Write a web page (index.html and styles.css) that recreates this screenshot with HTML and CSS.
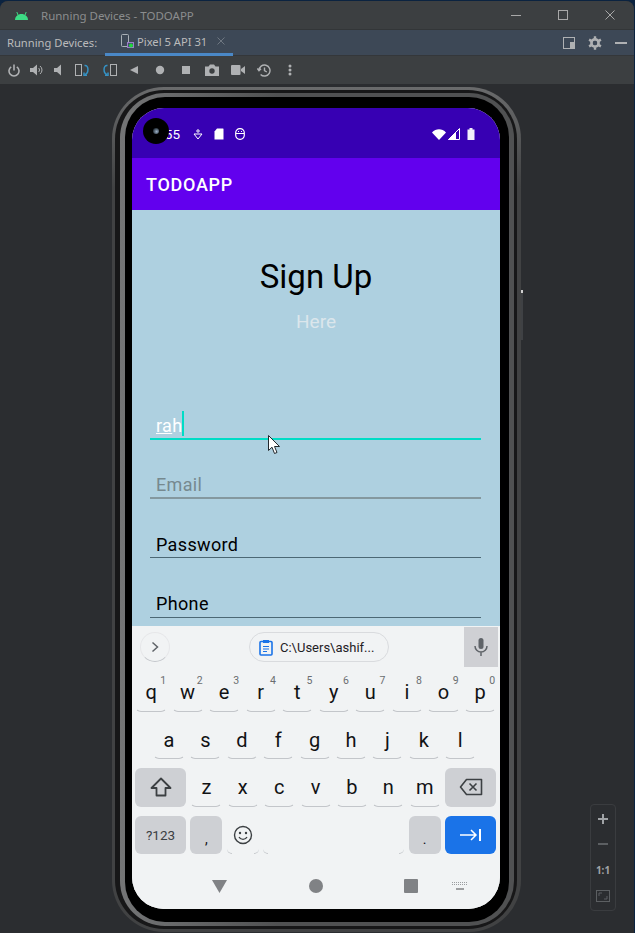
FILE: index.html
```html
<!DOCTYPE html>
<html lang="en">
<head>
  <meta charset="UTF-8">
  <meta name="viewport" content="width=device-width, initial-scale=1.0">
  <title>Running Devices - TODOAPP</title>
  <link rel="stylesheet" href="styles.css">
</head>
<body>
  <div class="window">
    <div class="titlebar">
      <svg class="android-logo" width="13" height="9" viewBox="0 0 13 9"><path d="M0 9C0 5.5 3 3 6.500 3S13 5.500 13 9Z" fill="#3ddc84"/><path d="M3 4 1.800 1M10 4l1.200-3" stroke="#3ddc84" stroke-width="1"/></svg>
      <span class="window-title">Running Devices - TODOAPP</span>
      <div class="window-controls">
        <svg width="10" height="10" viewBox="0 0 10 10"><path d="M0 5.500h10" stroke="#a8a8a8"/></svg>
        <svg width="10" height="10" viewBox="0 0 10 10"><rect x=".5" y=".5" width="9" height="9" fill="none" stroke="#a8a8a8"/></svg>
        <svg width="10" height="10" viewBox="0 0 10 10"><path d="M.5.500l9 9M9.500.500l-9 9" stroke="#a8a8a8"/></svg>
      </div>
    </div>

    <div class="tabbar">
      <span class="tabbar-label">Running Devices:</span>
      <div class="tab">
        <svg width="13" height="15" viewBox="0 0 13 15"><rect x=".5" y=".5" width="7" height="12" rx="1" fill="none" stroke="#a9b0b6"/><rect x="6.500" y="8.500" width="6" height="5" fill="#4b4a6e" stroke="#9a80c8"/><circle cx="10" cy="11.500" r="2" fill="#1fd63c"/></svg>
        <span>Pixel 5 API 31</span>
        <svg class="tab-close" width="8" height="8" viewBox="0 0 8 8"><path d="M.5.500l7 7M7.500.500l-7 7" stroke="#6e7781"/></svg>
      </div>
      <div class="tabbar-actions">
        <svg width="12" height="12" viewBox="0 0 12 12"><rect x=".5" y=".5" width="11" height="11" fill="none" stroke="#afb1b3"/><rect x="7" y="5" width="4" height="6" fill="#afb1b3"/></svg>
        <svg width="14" height="14" viewBox="0 0 14 14"><circle cx="7" cy="7" r="3.600" fill="none" stroke="#afb1b3" stroke-width="2.600"/><path d="M7 .2v2.300M7 11.500v2.300M1.100 3.600l3.900 2.250M12.900 10.400 9 8.150M1.100 10.400 5 8.150M12.900 3.600 9 5.850" stroke="#afb1b3" stroke-width="2.400"/><circle cx="7" cy="7" r="2.200" fill="#3d4856"/></svg>
        <svg width="12" height="12" viewBox="0 0 12 12"><path d="M0 6h12" stroke="#afb1b3" stroke-width="2"/></svg>
      </div>
    </div>

    <div class="toolbar">
      <svg width="12" height="13" viewBox="0 0 12 13"><path d="M3.200 2.800a5 5 0 1 0 5.600 0M6 .5v6" fill="none" stroke="#afb1b3" stroke-width="1.600"/></svg>
      <svg width="13" height="12" viewBox="0 0 13 12"><path d="M0 4h3l4-3.500v11L3 8H0Z" fill="#afb1b3"/><path d="M8.500 4a2.500 2.500 0 0 1 0 4M10 2a5 5 0 0 1 0 8" fill="none" stroke="#afb1b3"/></svg>
      <svg width="11" height="12" viewBox="0 0 11 12"><path d="M1 4h3l4-3.500v11L4 8H1Z" fill="#afb1b3"/></svg>
      <svg width="15" height="12" viewBox="0 0 15 12"><rect x=".5" y=".5" width="6" height="11" fill="none" stroke="#afb1b3"/><path d="M9.500 1.500c4.500-1 4.500 8 .5 9M9 8.500v3h3" fill="none" stroke="#3592c4" stroke-width="1.500"/></svg>
      <svg width="15" height="12" viewBox="0 0 15 12"><rect x="8.500" y=".5" width="6" height="11" fill="none" stroke="#afb1b3"/><path d="M5.500 1.500c-4.500-1-4.500 8-.5 9M6 8.500v3H3" fill="none" stroke="#3592c4" stroke-width="1.500"/></svg>
      <svg width="10" height="10" viewBox="0 0 10 10"><path d="M9 1v8L1 5Z" fill="#afb1b3"/></svg>
      <svg width="10" height="10" viewBox="0 0 10 10"><circle cx="5" cy="5" r="4.200" fill="#afb1b3"/></svg>
      <svg width="10" height="10" viewBox="0 0 10 10"><rect x="1" y="1" width="8" height="8" fill="#afb1b3"/></svg>
      <svg width="14" height="12" viewBox="0 0 14 12"><path d="M0 2.500h3.500L5 .5h4l1.500 2H14V12H0Z" fill="#afb1b3"/><circle cx="7" cy="7" r="2.700" fill="#3c3f41"/></svg>
      <svg width="14" height="10" viewBox="0 0 14 10"><rect y="0" width="9.500" height="10" rx="1" fill="#afb1b3"/><path d="M10 4l4-3v8l-4-3Z" fill="#afb1b3"/></svg>
      <svg width="14" height="13" viewBox="0 0 14 13"><path d="M2 6.500a5.500 5.500 0 1 1 1.600 3.900M.3 4.500 2 6.800 4 4.800M7.500 3.500v3.200l2.300 1.300" fill="none" stroke="#afb1b3" stroke-width="1.400"/></svg>
      <svg width="4" height="12" viewBox="0 0 4 12"><circle cx="2" cy="2" r="1.500" fill="#afb1b3"/><circle cx="2" cy="6" r="1.500" fill="#afb1b3"/><circle cx="2" cy="10" r="1.500" fill="#afb1b3"/></svg>
    </div>

    <div class="stage">
      <div class="phone">
        <div class="phone-band">
          <div class="phone-rim">
            <div class="phone-bezel">
              <div class="screen">
                <div class="statusbar">
                  <span class="clock">9:55</span>
                  <svg width="10" height="11" viewBox="0 0 10 11"><circle cx="5" cy="2" r="1.200" fill="none" stroke="#fff"/><path d="M1 5h8L5 10Z" fill="none" stroke="#fff"/></svg>
                  <svg width="10" height="12" viewBox="0 0 10 12"><path d="M3 .5h6a.5.500 0 0 1 .5.500v10.500H.5V3.500Z" fill="#fff"/></svg>
                  <svg width="10" height="12" viewBox="0 0 10 12"><rect x=".7" y=".7" width="8.600" height="10.600" rx="4" fill="none" stroke="#fff" stroke-width="1.200"/><path d="M1 5.500h8" stroke="#fff"/><path d="M3 3.500h1M6 3.500h1" stroke="#fff"/></svg>
                  <div class="status-right">
                    <svg width="14" height="11" viewBox="0 0 14 11"><path d="M0 3.500C4-.7 10-.7 14 3.500L7 11Z" fill="#fff"/></svg>
                    <svg width="12" height="12" viewBox="0 0 12 12"><path d="M11.500.5v11H.5Z" fill="none" stroke="#fff"/><path d="M0 12 8 4v8Z" fill="#fff"/></svg>
                    <svg class="battery" width="8" height="12" viewBox="0 0 8 12"><path d="M2.500 0h3v1.500H7.500V12H.5V1.500h2Z" fill="#f2f0fa"/></svg>
                  </div>
                </div>
                <div class="camera"><div class="camera-lens"></div></div>
                <div class="appbar">TODOAPP</div>

                <div class="content">
                  <h1 class="signup-title">Sign Up</h1>
                  <p class="signup-sub">Here</p>
                  <div class="field field-active"><span class="typed">ra</span>h<span class="caret"></span></div>
                  <div class="field field-hint">Email</div>
                  <div class="field">Password</div>
                  <div class="field field-last">Phone</div>
                </div>

                <div class="keyboard">
                  <div class="strip">
                    <div class="strip-toggle">
                      <svg width="8" height="12" viewBox="0 0 8 12"><path d="M1.500 1.500 6.500 6l-5 4.500" fill="none" stroke="#5f6368" stroke-width="1.500"/></svg>
                    </div>
                    <div class="clip-chip">
                      <svg width="14" height="17" viewBox="0 0 14 17"><rect x="1" y="2.500" width="12" height="13.500" rx="1" fill="none" stroke="#1a73e8" stroke-width="1.600"/><rect x="4" y="1" width="6" height="3" fill="#1a73e8"/><path d="M4 7.500h6M4 10h6M4 12.500h4" stroke="#1a73e8"/></svg>
                      <span>C:\Users\ashif...</span>
                    </div>
                    <div class="strip-mic">
                      <svg width="14" height="18" viewBox="0 0 14 18"><rect x="4.500" y="0" width="5" height="11" rx="2.500" fill="#5f6368"/><path d="M1 8a6 6 0 0 0 12 0M7 14v4" fill="none" stroke="#5f6368" stroke-width="1.500"/></svg>
                    </div>
                  </div>

                  <div class="key-row key-row-top">
                    <div class="key">q<span class="key-hint">1</span></div>
                    <div class="key">w<span class="key-hint">2</span></div>
                    <div class="key">e<span class="key-hint">3</span></div>
                    <div class="key">r<span class="key-hint">4</span></div>
                    <div class="key">t<span class="key-hint">5</span></div>
                    <div class="key">y<span class="key-hint">6</span></div>
                    <div class="key">u<span class="key-hint">7</span></div>
                    <div class="key">i<span class="key-hint">8</span></div>
                    <div class="key">o<span class="key-hint">9</span></div>
                    <div class="key">p<span class="key-hint">0</span></div>
                  </div>
                  <div class="key-row key-row-home">
                    <div class="key">a</div>
                    <div class="key">s</div>
                    <div class="key">d</div>
                    <div class="key">f</div>
                    <div class="key">g</div>
                    <div class="key">h</div>
                    <div class="key">j</div>
                    <div class="key">k</div>
                    <div class="key">l</div>
                  </div>
                  <div class="key-row">
                    <div class="key key-fn key-wide">
                      <svg width="22" height="20" viewBox="0 0 22 20"><path d="M11 1.500 20.500 11H15.500V18.500H6.500V11H1.500Z" fill="none" stroke="#3c4043" stroke-width="1.800" stroke-linejoin="round"/></svg>
                    </div>
                    <div class="key">z</div>
                    <div class="key">x</div>
                    <div class="key">c</div>
                    <div class="key">v</div>
                    <div class="key">b</div>
                    <div class="key">n</div>
                    <div class="key">m</div>
                    <div class="key key-fn key-wide">
                      <svg width="24" height="18" viewBox="0 0 24 18"><path d="M7.500 1.500H22.500V16.500H7.500L1.500 9Z" fill="none" stroke="#3c4043" stroke-width="1.600" stroke-linejoin="round"/><path d="M10.500 5.500l7 7M17.500 5.500l-7 7" stroke="#3c4043" stroke-width="1.600"/></svg>
                    </div>
                  </div>
                  <div class="key-row">
                    <div class="key key-fn key-wide key-symbols">?123</div>
                    <div class="key key-fn key-punct">,</div>
                    <div class="key key-curled">
                      <svg width="20" height="20" viewBox="0 0 20 20"><circle cx="10" cy="10" r="8.500" fill="none" stroke="#3c4043" stroke-width="1.400"/><circle cx="7" cy="8" r="1.200" fill="#3c4043"/><circle cx="13" cy="8" r="1.200" fill="#3c4043"/><path d="M6 12a4.500 4.500 0 0 0 8 0" fill="none" stroke="#3c4043" stroke-width="1.300"/></svg>
                    </div>
                    <div class="key key-curled key-space"></div>
                    <div class="key key-fn key-punct">.</div>
                    <div class="key key-enter key-wide">
                      <svg width="21" height="12" viewBox="0 0 21 12"><path d="M0 6h16M11 1l5 5-5 5" fill="none" stroke="#fff" stroke-width="1.500"/><path d="M20 0v12" stroke="#fff" stroke-width="2"/></svg>
                    </div>
                  </div>

                  <div class="navbar">
                    <svg width="15" height="13" viewBox="0 0 15 13"><path d="M0 0h15L7.500 13Z" fill="#808285"/></svg>
                    <svg width="14" height="14" viewBox="0 0 14 14"><circle cx="7" cy="7" r="7" fill="#808285"/></svg>
                    <svg width="14" height="14" viewBox="0 0 14 14"><rect width="14" height="14" rx="1" fill="#808285"/></svg>
                    <svg width="16" height="8" viewBox="0 0 16 8"><path d="M0 .5h16M0 2.500h16" stroke="#9a9c9f" stroke-dasharray="1 1"/><path d="M4 7h8" stroke="#808285" stroke-width="1.500"/></svg>
                  </div>
                </div>
              </div>
            </div>
          </div>
        </div>
      </div>
      <div class="side-button"></div>

      <div class="zoom-panel">
        <svg width="12" height="12" viewBox="0 0 12 12"><path d="M6 1v10M1 6h10" stroke="#a0a3a6" stroke-width="2"/></svg>
        <svg width="12" height="12" viewBox="0 0 12 12"><path d="M1 6h10" stroke="#5c5f62" stroke-width="2"/></svg>
        <span class="zoom-ratio">1:1</span>
        <svg width="14" height="12" viewBox="0 0 14 12"><rect x=".5" y=".5" width="13" height="11" fill="none" stroke="#5c5f62"/><path d="M3 6V3h3M11 6v3H8" fill="none" stroke="#5c5f62"/></svg>
      </div>

      <svg class="cursor" width="13" height="20" viewBox="0 0 13 20"><path d="M.5.500V15.500L4 12.200 6.500 18.500 9 17.500 6.500 11.500H11.500Z" fill="#fff" stroke="#23282d"/></svg>
    </div>
  </div>
</body>
</html>
```

FILE: styles.css
```css
* {
  box-sizing: border-box;
}

html,
body {
  height: 100%;
  margin: 0;
}

body {
  background-color: #0b2340;
  font-family: "Noto Sans", sans-serif;
  overflow: hidden;
}

svg {
  display: block;
  flex: none;
}

.window {
  height: 933px;
  margin: 1px 1px 0 0;
  border-radius: 8px 8px 0 0;
  background-color: #2b2d30;
  overflow: hidden;
  display: flex;
  flex-direction: column;
}

/* title, tab and tool rows */
.titlebar {
  height: 29px;
  flex: none;
  display: flex;
  align-items: center;
  padding-left: 15px;
  background-color: #3c3f41;
  border-bottom: 1px solid #333638;
}

.android-logo {
  margin-right: 13px;
}

.window-title {
  color: #8b8d8e;
  font-size: 11.500px;
}

.window-controls {
  margin-left: auto;
  margin-right: 19px;
  display: flex;
  gap: 37px;
}

.tabbar {
  height: 26px;
  flex: none;
  display: flex;
  align-items: center;
  background-color: #3d4856;
  border-bottom: 1px solid #34373a;
  color: #bbbbbb;
  font-size: 11.200px;
}

.tabbar-label {
  width: 105px;
  padding-left: 7px;
}

.tab {
  width: 128px;
  height: 26px;
  padding-left: 16px;
  display: flex;
  align-items: center;
  gap: 3px;
  border-bottom: 3px solid #4a88c7;
}

.tab-close {
  margin-left: 7px;
}

.tabbar-actions {
  margin-left: auto;
  margin-right: 7px;
  display: flex;
  align-items: center;
  gap: 13px;
}

.toolbar {
  height: 28px;
  flex: none;
  padding-left: 3px;
  display: grid;
  grid-template-columns: 22px 22px 22px 26px 28px 22px 30px 22px 30px 22px 30px 22px;
  align-items: center;
  justify-items: center;
  justify-content: start;
  background-color: #3c3f41;
}

/* phone frame, one nested box per ring */
.stage {
  position: relative;
  flex: 1;
  padding: 3px 0 0 112px;
}

.phone {
  width: 409px;
  padding: 3px 4px 3px 3px;
  border-radius: 52px;
  background: linear-gradient(#6a6b6c, #414243 12%);
}

.phone-band {
  padding: 3px 3px 3px 5px;
  border-radius: 49px;
  background-color: #171718;
}

.phone-rim {
  padding: 4px 5px;
  border-radius: 45px;
  background: linear-gradient(90deg, #747576, #505152 40%);
}

.phone-bezel {
  padding: 11px 9px 13px 7px;
  border-radius: 40px;
  background-color: #000000;
}

.screen {
  position: relative;
  width: 368px;
  height: 801px;
  border-radius: 32px;
  overflow: hidden;
  display: flex;
  flex-direction: column;
  font-family: Roboto, sans-serif;
  background-color: #f1f3f4;
}

.side-button {
  position: absolute;
  left: 521px;
  top: 206px;
  width: 2px;
  height: 50px;
  background: linear-gradient(#d0d0d0 3px, #3f4144 3px);
}

/* android status + app bars */
.statusbar {
  height: 50px;
  flex: none;
  display: flex;
  align-items: center;
  padding: 2px 25px 0 22px;
  background-color: #3700b3;
  color: #ffffff;
  font-size: 13.500px;
}

.clock {
  width: 39px;
  text-align: left;
}

.statusbar svg {
  margin-right: 11px;
}

.statusbar .status-right {
  margin-left: auto;
  display: flex;
  align-items: center;
}

.status-right svg {
  margin-right: 2px;
}

.status-right .battery {
  margin: 0 0 0 5px;
}

.camera {
  position: absolute;
  left: 11px;
  top: 10px;
  width: 26px;
  height: 26px;
  border-radius: 50%;
  background-color: #000000;
  display: flex;
  align-items: center;
  justify-content: center;
}

.camera-lens {
  width: 6px;
  height: 6px;
  border-radius: 50%;
  background: radial-gradient(circle at 60% 60%, #9db2c8, #28323c 70%);
}

.appbar {
  height: 52px;
  flex: none;
  display: flex;
  align-items: center;
  padding-left: 14px;
  background-color: #6200ee;
  color: #ffffff;
  font-size: 18px;
  font-weight: 500;
  letter-spacing: 0.7px;
}

/* sign up form */
.content {
  flex: 1;
  min-height: 0;
  overflow: hidden;
  background-color: #aed0e0;
  color: #000000;
  display: flex;
  flex-direction: column;
}

.signup-title {
  margin: 48px 0 0;
  text-align: center;
  font-size: 33px;
  font-weight: 400;
  line-height: 38px;
}

.signup-sub {
  margin: 15px 0 47px;
  text-align: center;
  font-size: 19px;
  line-height: 22px;
  color: #dbe6ec;
}

.field {
  flex: none;
  height: 59px;
  margin: 0 19px 0 18px;
  padding-left: 6px;
  display: flex;
  align-items: flex-end;
  border-bottom: 1px solid #4c6875;
  font-size: 18px;
  line-height: 24px;
  letter-spacing: 0.35px;
}

.field-active {
  height: 60px;
  position: relative;
  border-bottom: 2px solid #00dcc6;
  color: #ffffff;
}

.field-hint {
  border-bottom: 2px solid #84989f;
  color: #76898f;
}

.field-last {
  height: 60px;
  padding-bottom: 1px;
}

.typed {
  text-decoration: underline;
  text-decoration-thickness: 1px;
  text-decoration-skip-ink: none;
}

.caret {
  position: absolute;
  left: 32px;
  bottom: 2px;
  width: 2px;
  height: 25px;
  background-color: #00dcc6;
}

/* keyboard */
.keyboard {
  height: 283px;
  flex: none;
  background-color: #f1f3f4;
}

.strip {
  height: 41px;
  display: flex;
  align-items: center;
  padding: 1px 2px 0 8px;
}

.strip-toggle {
  width: 30px;
  height: 30px;
  border-radius: 50%;
  border: 1px solid #e6e7e9;
  border-bottom-color: #c4c7cb;
  display: flex;
  align-items: center;
  justify-content: center;
}

.clip-chip {
  width: 140px;
  height: 30px;
  margin-left: 79px;
  padding-left: 9px;
  display: flex;
  align-items: center;
  gap: 7px;
  border: 1px solid #d9dbde;
  border-radius: 15px;
  color: #1f2124;
  font-size: 13px;
}

.strip-mic {
  width: 34px;
  height: 40px;
  margin-left: auto;
  display: flex;
  align-items: center;
  justify-content: center;
  background-color: #cfd0d4;
}

.key-row {
  height: 38.500px;
  margin-top: 9px;
  padding: 0 3px;
  display: flex;
  gap: 4.400px;
}

.key-row-top {
  margin-top: 6px;
  padding-right: 4px;
}

.key-row-top .key {
  flex: 1;
}

.key-row-home {
  padding-left: 21px;
}

.key {
  position: relative;
  flex: none;
  width: 32px;
  border: 1px solid transparent;
  border-bottom-color: #c3c6ca;
  border-radius: 6px;
  display: flex;
  align-items: center;
  justify-content: center;
  color: #111214;
  font-size: 20px;
}

.key-hint {
  position: absolute;
  right: 0;
  top: 1px;
  color: #6a6d70;
  font-size: 10.500px;
  line-height: 12px;
}

.key-fn,
.key-enter {
  border: none;
}

.key-fn {
  background-color: #ced0d4;
}

.key-wide {
  width: 51px;
}

.key-symbols {
  color: #3c4043;
  font-size: 13.500px;
}

.key-punct {
  padding-top: 8px;
  font-size: 14px;
}

.key-space {
  width: 141px;
}

/* bottom row keys only show their rounded corners */
.key-curled {
  border-bottom-color: transparent;
}

.key-curled::before,
.key-curled::after {
  content: "";
  position: absolute;
  bottom: -1px;
  width: 5px;
  height: 5px;
  border-bottom: 1px solid #c3c6ca;
}

.key-curled::before {
  left: -1px;
  border-bottom-left-radius: 5px;
}

.key-curled::after {
  right: -1px;
  border-bottom-right-radius: 5px;
}

.key-enter {
  background-color: #1a73e8;
}

.navbar {
  height: 48px;
  padding: 16px 0 0 80px;
  display: flex;
  align-items: center;
}

.navbar svg:nth-child(2) {
  margin-left: 82px;
}

.navbar svg:nth-child(3) {
  margin-left: 81px;
}

.navbar svg:nth-child(4) {
  margin-left: 34px;
}

/* emulator side panel + pointer, both float over the stage */
.zoom-panel {
  position: absolute;
  left: 590px;
  top: 720px;
  width: 26px;
  height: 107px;
  padding: 8px 0;
  display: flex;
  flex-direction: column;
  align-items: center;
  justify-content: space-between;
  border: 1px solid #3a3c3f;
  border-radius: 4px;
}

.zoom-ratio {
  color: #a0a3a6;
  font-size: 10px;
  font-weight: 700;
}

.cursor {
  position: absolute;
  left: 268px;
  top: 351px;
}
```
